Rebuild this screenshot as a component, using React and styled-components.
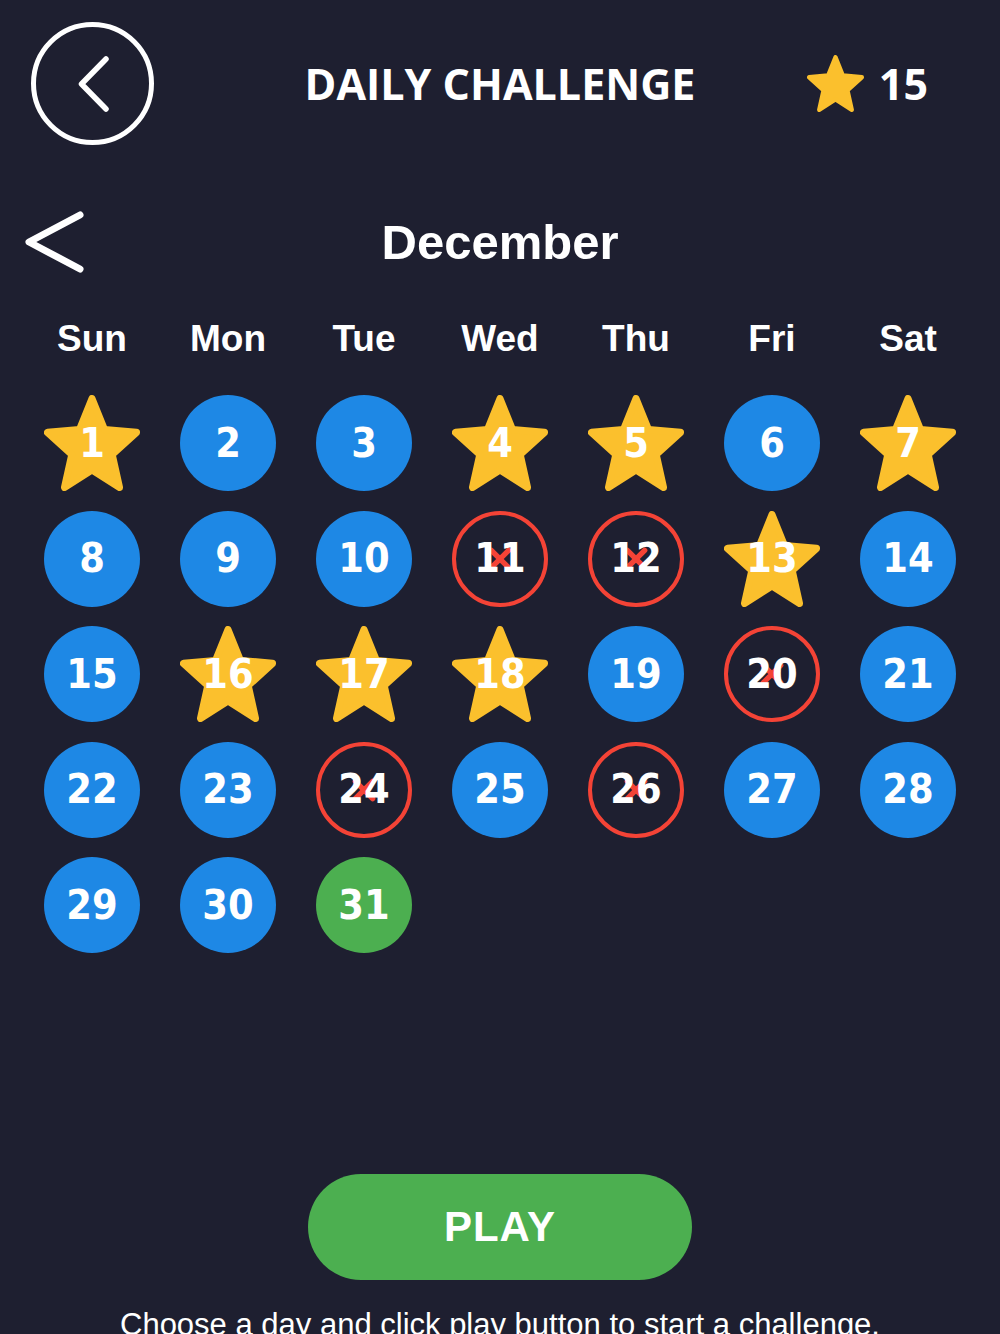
import React from "react";
import styled, { createGlobalStyle } from "styled-components";

const GlobalStyle = createGlobalStyle`
  html, body { margin: 0; padding: 0; background: #1e1f30; }
  * { box-sizing: border-box; }
`;

const Page = styled.div`
  width: 1000px;
  height: 1334px;
  overflow: hidden;
  background: #1e1f30;
  color: #fff;
  display: flex;
  flex-direction: column;
  font-family: "Liberation Sans", Arial, sans-serif;
`;

const Header = styled.header`
  display: grid;
  grid-template-columns: 1fr auto 1fr;
  align-items: center;
  padding-top: 22px;
  height: 146px;
`;

const BackButton = styled.button`
  width: 123px;
  height: 123px;
  margin-left: 31px;
  border-radius: 50%;
  border: 5px solid #fff;
  background: transparent;
  padding: 0;
  display: flex;
  align-items: center;
  justify-content: center;
  cursor: pointer;
`;

const Title = styled.h1`
  margin: 0;
  font-family: "Open Sans", sans-serif;
  font-weight: 700;
  font-size: 43px;
  line-height: 1;
`;

const Score = styled.div`
  justify-self: end;
  margin-right: 72px;
  display: flex;
  align-items: center;
  gap: 15px;
  font-family: "Open Sans", sans-serif;
  font-weight: 700;
  font-size: 43px;
  line-height: 1;
`;

const MonthRow = styled.div`
  margin-top: 66px;
  height: 58px;
  display: grid;
  grid-template-columns: 1fr auto 1fr;
  align-items: center;
`;

const MonthArrow = styled.button`
  justify-self: start;
  margin-left: 22px;
  width: 64px;
  height: 62px;
  padding: 0;
  border: none;
  background: transparent;
  display: flex;
  cursor: pointer;
`;

const MonthName = styled.h2`
  margin: 0;
  font-weight: 700;
  font-size: 49px;
  line-height: 1;
`;

const WeekRow = styled.div`
  margin: 45px 24px 0;
  display: grid;
  grid-template-columns: repeat(7, 136px);
  height: 50px;
  align-items: center;
`;

const WeekDay = styled.div`
  text-align: center;
  font-weight: 700;
  font-size: 37px;
  line-height: 50px;
`;

const Divider = styled.hr`
  margin: 19px 24px 0;
  height: 2px;
  border: none;
  background: #3b3c4e;
`;

const DaysGrid = styled.div`
  margin: 12px 24px 0;
  display: grid;
  grid-template-columns: repeat(7, 136px);
  grid-auto-rows: 96px;
  row-gap: 19.5px;
`;

const Cell = styled.div`
  position: relative;
  width: 96px;
  height: 96px;
  justify-self: center;
  display: flex;
  align-items: center;
  justify-content: center;
  border-radius: 50%;
  background: ${(p) =>
    p.$kind === "open" ? "#1e88e5" : p.$kind === "today" ? "#4caf50" : "transparent"};
  border: ${(p) => (p.$kind === "missed" ? "4px solid #f44336" : "none")};
`;

const StarShape = styled.svg`
  position: absolute;
  inset: 0;
  width: 96px;
  height: 96px;
`;

const CrossMark = styled.svg`
  position: absolute;
  left: 50%;
  top: 50%;
  width: 26px;
  height: 26px;
  transform: translate(-50%, -50%);
`;

const DayNumber = styled.span`
  position: relative;
  font-family: "DejaVu Sans Condensed", "DejaVu Sans", sans-serif;
  font-stretch: condensed;
  font-weight: 700;
  font-size: 41px;
  line-height: 1;
  color: #fff;
`;

const Footer = styled.div`
  margin-top: 221px;
  display: flex;
  flex-direction: column;
  align-items: center;
`;

const PlayButton = styled.button`
  width: 384px;
  height: 106px;
  border: none;
  border-radius: 53px;
  background: #4caf50;
  color: #fff;
  font-family: "Liberation Sans", Arial, sans-serif;
  font-weight: 700;
  font-size: 42px;
  letter-spacing: 1px;
  cursor: pointer;
`;

const Hint = styled.p`
  margin: 27px 0 0;
  font-size: 31px;
  line-height: 36px;
  white-space: nowrap;
`;

const STAR_POINTS =
  "12,2 14.81,8.63 22,9.24 16.54,13.97 18.18,21 12,17.27 5.82,21 7.46,13.97 2,9.24 9.19,8.63";

function Star({ size }) {
  return (
    <svg width={size} height={size} viewBox="1.2 1.2 21.6 20.6" preserveAspectRatio="none">
      <polygon
        points={STAR_POINTS}
        fill="#fbc02d"
        stroke="#fbc02d"
        strokeWidth="1.6"
        strokeLinejoin="round"
      />
    </svg>
  );
}

const STATUS = {
  1: "star", 4: "star", 5: "star", 7: "star", 13: "star", 16: "star", 17: "star", 18: "star",
  11: "missed", 12: "missed", 20: "missed", 24: "missed", 26: "missed",
  31: "today",
};

function Day({ n }) {
  const kind = STATUS[n] || "open";
  return (
    <Cell $kind={kind}>
      {kind === "star" && (
        <StarShape viewBox="1.2 1.2 21.6 20.6" preserveAspectRatio="none">
          <polygon
            points={STAR_POINTS}
            fill="#fbc02d"
            stroke="#fbc02d"
            strokeWidth="1.6"
            strokeLinejoin="round"
          />
        </StarShape>
      )}
      {kind === "missed" && (
        <CrossMark viewBox="0 0 24 24">
          <path d="M4 4 L20 20 M20 4 L4 20" stroke="#f44336" strokeWidth="5" strokeLinecap="round" />
        </CrossMark>
      )}
      <DayNumber>{n}</DayNumber>
    </Cell>
  );
}

export default function App() {
  const days = Array.from({ length: 31 }, (_, i) => i + 1);
  return (
    <>
      <GlobalStyle />
      <Page>
        <Header>
          <BackButton aria-label="Back">
            <svg width="60" height="60" viewBox="0 0 60 60">
              <polyline
                points="43,5 18.5,30 43,55"
                fill="none"
                stroke="#fff"
                strokeWidth="5.5"
                strokeLinecap="round"
                strokeLinejoin="round"
              />
            </svg>
          </BackButton>
          <Title>DAILY CHALLENGE</Title>
          <Score>
            <Star size={57} />
            <span>15</span>
          </Score>
        </Header>

        <MonthRow>
          <MonthArrow aria-label="Previous month">
            <svg width="64" height="62" viewBox="0 0 64 62">
              <polyline
                points="58,4 7,31 58,58"
                fill="none"
                stroke="#fff"
                strokeWidth="7"
                strokeLinecap="round"
                strokeLinejoin="round"
              />
            </svg>
          </MonthArrow>
          <MonthName>December</MonthName>
          <div />
        </MonthRow>

        <WeekRow>
          {["Sun", "Mon", "Tue", "Wed", "Thu", "Fri", "Sat"].map((d) => (
            <WeekDay key={d}>{d}</WeekDay>
          ))}
        </WeekRow>
        <Divider />

        <DaysGrid>
          {days.map((n) => (
            <Day key={n} n={n} />
          ))}
        </DaysGrid>

        <Footer>
          <PlayButton>PLAY</PlayButton>
          <Hint>Choose a day and click play button to start a challenge.</Hint>
        </Footer>
      </Page>
    </>
  );
}
